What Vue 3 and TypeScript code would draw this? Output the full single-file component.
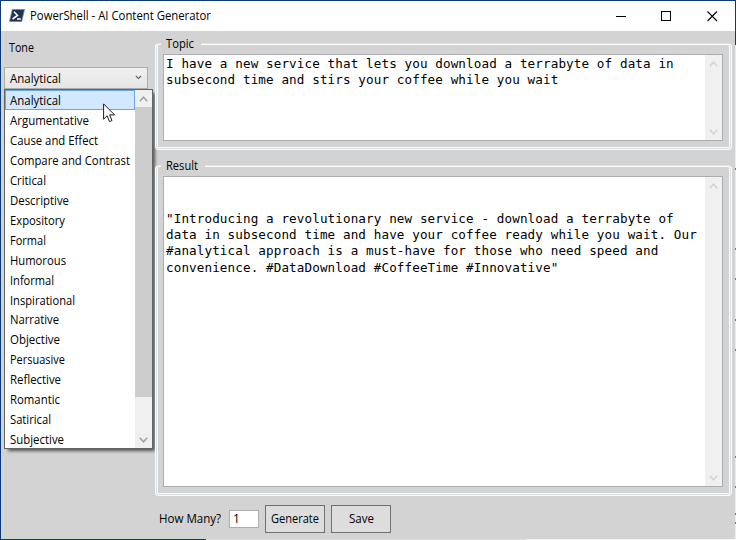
<script setup lang="ts">
import { ref } from 'vue'

interface Tone { name: string; width: number }

const tones: Tone[] = [
  { name: 'Analytical', width: 51 },
  { name: 'Argumentative', width: 79 },
  { name: 'Cause and Effect', width: 88 },
  { name: 'Compare and Contrast', width: 120 },
  { name: 'Critical', width: 36 },
  { name: 'Descriptive', width: 59 },
  { name: 'Expository', width: 55 },
  { name: 'Formal', width: 36 },
  { name: 'Humorous', width: 56 },
  { name: 'Informal', width: 44 },
  { name: 'Inspirational', width: 65 },
  { name: 'Narrative', width: 49 },
  { name: 'Objective', width: 50 },
  { name: 'Persuasive', width: 55 },
  { name: 'Reflective', width: 51 },
  { name: 'Romantic', width: 50 },
  { name: 'Satirical', width: 41 },
  { name: 'Subjective', width: 54 },
]
const selected = ref('Analytical')
const count = ref('1')
const edgeMarks = [167, 247, 277, 318, 348, 455, 485, 512, 521]
</script>

<template>
  <div class="window">
    <header class="titlebar">
      <svg class="app-icon" width="16" height="13" viewBox="0 0 16 13">
        <path d="M3.3 0.5H15.5L12.7 12.5H0.5Z" fill="#1d3455" stroke="#6f86a5" stroke-width=".8" />
        <path d="M4.9 2.8L8.5 6.3L3.6 10" fill="none" stroke="#fff" stroke-width="1.6" />
        <path d="M8 10H11.8" stroke="#fff" stroke-width="1.5" />
      </svg>
      <svg class="title" width="200" height="18"><text x="0" y="13" textLength="181" lengthAdjust="spacingAndGlyphs">PowerShell - AI Content Generator</text></svg>
      <div class="caption">
        <svg width="46" height="29"><path d="M11 14.5H21" stroke="#000" /></svg>
        <svg width="46" height="29"><rect x="10.5" y="9.5" width="9" height="9" fill="none" stroke="#000" /></svg>
        <svg width="39" height="29"><path d="M10.5 9.5L20 19M20 9.5L10.5 19" stroke="#000" stroke-width="1.1" /></svg>
      </div>
    </header>
    <div class="body">
      <aside class="side">
        <svg class="label" width="40" height="18"><text x="0" y="13" textLength="25" lengthAdjust="spacingAndGlyphs">Tone</text></svg>
        <div class="combo">
          <svg width="80" height="18"><text x="0" y="13" textLength="51" lengthAdjust="spacingAndGlyphs">{{ selected }}</text></svg>
          <svg width="7" height="5" viewBox="0 0 7 5"><path d="M.8 .8L3.5 3.5L6.2 .8" fill="none" stroke="#606060" stroke-width="1.2" /></svg>
        </div>
        <div class="dropdown">
          <ul>
            <li v-for="t in tones" :key="t.name" :class="{ active: t.name === selected }" @click="selected = t.name">
              <svg width="125" height="18"><text x="0" y="13" :textLength="t.width" lengthAdjust="spacingAndGlyphs">{{ t.name }}</text></svg>
            </li>
          </ul>
          <div class="scroll on">
            <svg width="9" height="6" viewBox="0 0 9 6"><path d="M.8 5.2L4.5 1.2L8.2 5.2" /></svg>
            <div class="thumb"></div>
            <svg width="9" height="6" viewBox="0 0 9 6"><path d="M.8 .8L4.5 4.8L8.2 .8" /></svg>
          </div>
        </div>
        <svg class="cursor" width="13" height="20" viewBox="0 0 13 20">
          <path d="M.6 .9V16.2L4.1 12.8L6.5 18.6L9 17.5L6.6 11.9H11.6Z" fill="#fff" stroke="#1a1a24" stroke-width="1" />
        </svg>
      </aside>
      <main class="main">
        <section class="group topic">
          <div class="legend"><svg width="35" height="18"><text x="0" y="13" textLength="28" lengthAdjust="spacingAndGlyphs">Topic</text></svg></div>
          <div class="textbox">
            <pre>I have a new service that lets you download a terrabyte of data in
subsecond time and stirs your coffee while you wait</pre>
            <div class="scroll">
              <svg width="9" height="6" viewBox="0 0 9 6"><path d="M.8 5.2L4.5 1.2L8.2 5.2" /></svg>
              <svg width="9" height="6" viewBox="0 0 9 6"><path d="M.8 .8L4.5 4.8L8.2 .8" /></svg>
            </div>
          </div>
        </section>
        <section class="group result">
          <div class="legend"><svg width="39" height="18"><text x="0" y="13" textLength="32" lengthAdjust="spacingAndGlyphs">Result</text></svg></div>
          <div class="textbox">
            <pre>"Introducing a revolutionary new service - download a terrabyte of
data in subsecond time and have your coffee ready while you wait. Our
#analytical approach is a must-have for those who need speed and
convenience. #DataDownload #CoffeeTime #Innovative"</pre>
            <div class="scroll">
              <svg width="9" height="6" viewBox="0 0 9 6"><path d="M.8 5.2L4.5 1.2L8.2 5.2" /></svg>
              <svg width="9" height="6" viewBox="0 0 9 6"><path d="M.8 .8L4.5 4.8L8.2 .8" /></svg>
            </div>
          </div>
        </section>
        <footer class="actions">
          <svg class="many" width="70" height="18"><text x="0" y="13" textLength="62" lengthAdjust="spacingAndGlyphs">How Many?</text></svg>
          <div class="count"><svg width="10" height="16"><text x="0" y="12">{{ count }}</text></svg></div>
          <button><svg width="56" height="18"><text x="4" y="13" textLength="48" lengthAdjust="spacingAndGlyphs">Generate</text></svg></button>
          <button><svg width="33" height="18"><text x="4" y="13" textLength="25" lengthAdjust="spacingAndGlyphs">Save</text></svg></button>
        </footer>
      </main>
    </div>
    <div class="edge-right"><i v-for="y in edgeMarks" :key="y" :style="{ top: y + 'px' }"></i></div>
    <div class="edge-bottom"></div>
  </div>
</template>

<style>
body { margin: 0; overflow: hidden; }
</style>

<style scoped>
* { box-sizing: border-box; }
svg { display: block; flex: none; overflow: visible; }
.window {
  position: relative;
  display: flex;
  flex-direction: column;
  width: 736px;
  height: 540px;
  border: 1px solid #0c3a72;
  background: #d3d3d3;
  color: #000;
  font-family: "Open Sans", "Noto Sans", sans-serif;
  font-size: 12px;
}
.titlebar { display: flex; align-items: center; height: 30px; background: #fff; padding-left: 8px; flex: none; }
.title { margin-left: 5px; }
.app-icon { margin-top: -1px; }
.caption { display: flex; margin-left: auto; margin-right: -1px; }
.body { display: grid; grid-template-columns: 154px 577px; flex: 1; min-height: 0; }
.side { position: relative; padding: 8px 0 0 3px; }
.label { margin-left: 5px; }
.combo {
  display: flex;
  align-items: center;
  justify-content: space-between;
  width: 144px;
  height: 22px;
  margin-top: 10px;
  padding: 2px 5px 0;
  border: 1px solid #acacac;
  background: linear-gradient(#f0f0f0, #e5e5e5);
}
.combo svg:last-child { margin-top: -4px; }
.dropdown {
  position: absolute;
  left: 3px;
  top: 58px;
  display: flex;
  width: 149px;
  height: 360px;
  border: 1px solid #646464;
  background: #fff;
  box-shadow: 3px 3px 3px -1px rgba(0, 0, 0, .6);
}
ul { list-style: none; margin: 0; padding: 0; flex: 1; }
li { height: 19.96px; padding: 2px 0 0 5px; }
li.active { background: #d1e8ff; box-shadow: inset 0 0 0 1px #66a7e8; }
.scroll {
  display: flex;
  flex-direction: column;
  align-items: center;
  justify-content: space-between;
  width: 17px;
  flex: none;
  padding: 6px 0 5px;
  background: #f0f0f0;
}
.scroll path { fill: none; stroke: #d3d3d3; stroke-width: 1.5; }
.scroll.on { justify-content: flex-start; }
.scroll.on path { stroke: #a0a0a0; }
.thumb { width: 17px; height: 290px; margin-top: 5px; background: #cdcdcd; }
.scroll.on svg:last-child { margin-top: auto; }
.cursor { position: absolute; left: 102px; top: 72px; }
.main { display: flex; flex-direction: column; padding-top: 12px; }
.group {
  position: relative;
  flex: none;
  border: 1px solid #fbfdff;
  border-top-color: #dde4e9;
  border-radius: 4px;
  box-shadow:
    inset 0 1px 0 0 #fbfdff,
    inset 0 0 0 1px #d5dfe5,
    inset 0 -2px 0 0 #fbfdff,
    inset 2px 0 0 0 #fbfdff,
    inset -2px 0 0 0 #fbfdff;
  padding: 10px 8px 8px 7px;
}
.topic { height: 107px; }
.result { height: 331px; margin-top: 15px; }
.legend { position: absolute; left: 5px; top: -9px; padding-left: 5px; background: #d3d3d3; }
.textbox { display: flex; height: 100%; border: 1px solid #abadb3; background: #fff; }
pre {
  margin: 0;
  padding: 1px 0 0 2px;
  flex: 1;
  font: 12.6px/16.33px "DejaVu Sans Mono", monospace;
  letter-spacing: .112px;
}
.result pre { padding-top: 33.7px; }
.actions { display: flex; align-items: center; height: 28px; margin-top: 9px; padding-left: 4px; }
.count { width: 30px; height: 18px; padding: 0 0 0 3px; border: 1px solid #abadb3; background: #fff; }
button {
  display: flex;
  align-items: center;
  justify-content: center;
  width: 60px;
  height: 28px;
  margin: 0 0 0 6px;
  padding: 0;
  border: 1px solid #707070;
  background: #ddd;
  font: inherit;
}
.edge-right { position: absolute; top: 44px; right: -1px; width: 1px; bottom: -1px; background: #ededed; }
.edge-right i { position: absolute; width: 1px; height: 2px; margin-top: -44px; background: #777; }
.edge-bottom { position: absolute; left: 205px; right: -1px; bottom: -1px; height: 1px; background: linear-gradient(90deg, #dedede 320px, #f2f2f2 320px); }
</style>
